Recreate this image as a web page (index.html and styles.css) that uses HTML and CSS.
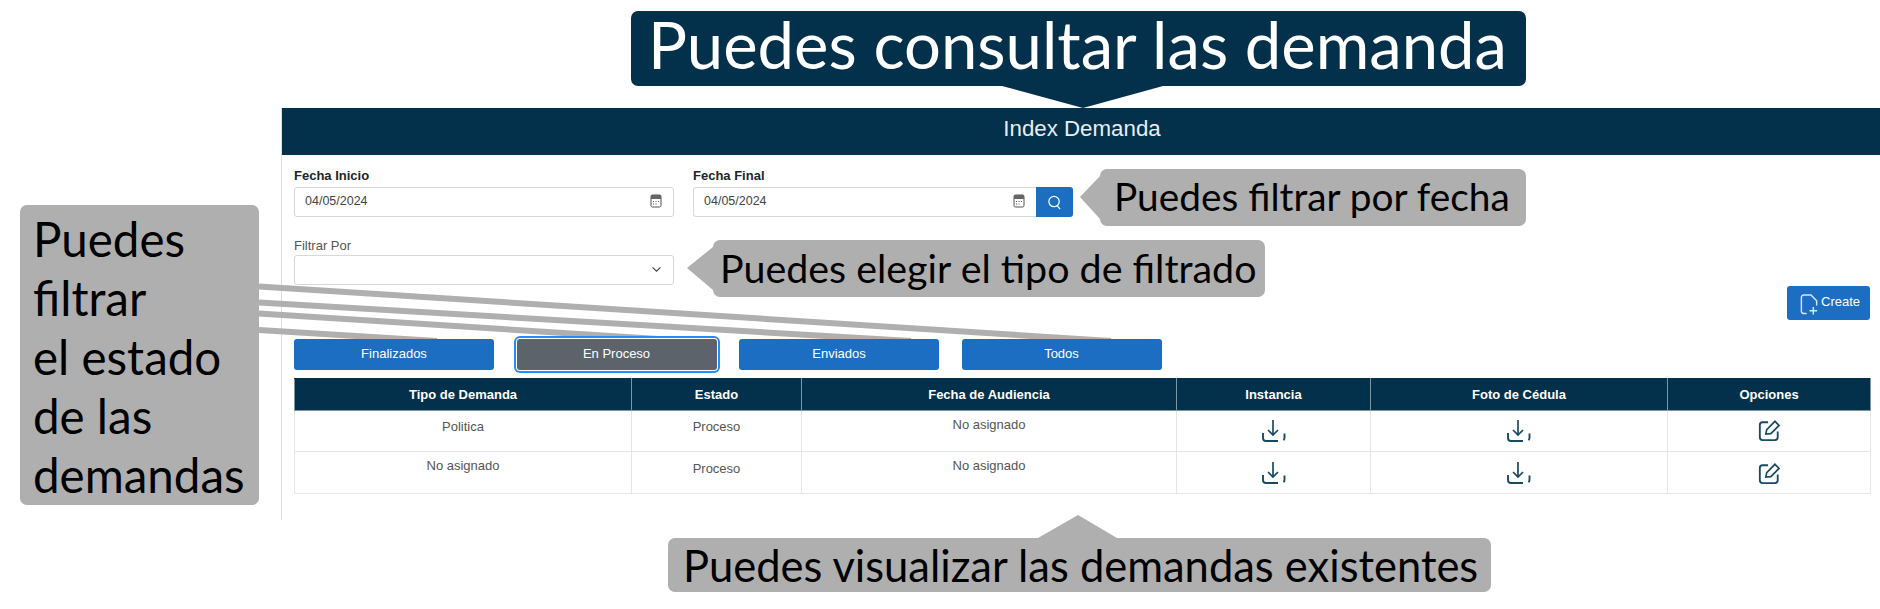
FILE: index.html
```html
<!doctype html>
<html lang="es">
<head>
    <meta charset="UTF-8">
    <title>Index Demanda</title>
    <link rel="stylesheet" href="styles.css">
</head>
<body>
    <div class="stage">
        <section class="panel">
            <header class="panel-title">Index Demanda</header>

            <div class="date-row">
                <div class="field">
                    <label class="label-strong">Fecha Inicio</label>
                    <div class="input">
                        <span>04/05/2024</span>
                        <svg class="cal" viewBox="0 0 12 14"><rect x="1" y="1" width="10" height="12" rx="1.5" fill="none" stroke="#555" stroke-width="1"/><rect x="1" y="1" width="10" height="4" fill="#666"/><path d="M3 7.5h1M5.500 7.500h1M8 7.500h1M3 10h1M5.500 10h1" stroke="#555" stroke-width="1"/></svg>
                    </div>
                </div>
                <div class="field">
                    <label class="label-strong">Fecha Final</label>
                    <div class="input-group">
                        <div class="input input-joined">
                            <span>04/05/2024</span>
                            <svg class="cal" viewBox="0 0 12 14"><rect x="1" y="1" width="10" height="12" rx="1.5" fill="none" stroke="#555" stroke-width="1"/><rect x="1" y="1" width="10" height="4" fill="#666"/><path d="M3 7.5h1M5.500 7.500h1M8 7.500h1M3 10h1M5.500 10h1" stroke="#555" stroke-width="1"/></svg>
                        </div>
                        <button class="search-btn">
                            <svg viewBox="0 0 16 16" width="15" height="15"><circle cx="7.500" cy="7" r="5.500" fill="none" stroke="#fff" stroke-width="1.300"/><path d="M11 11.500L14 15" stroke="#fff" stroke-width="1.300"/></svg>
                        </button>
                    </div>
                </div>
            </div>

            <div class="field filter-field">
                <label class="label-plain">Filtrar Por</label>
                <div class="input select">
                    <svg class="chev" viewBox="0 0 12 8"><path d="M1.500 1.500L6 6l4.500-4.500" fill="none" stroke="#444" stroke-width="1.300"/></svg>
                </div>
            </div>

            <div class="create-row">
                <button class="create-btn">
                    <svg viewBox="0 0 22 24" width="21" height="23"><path d="M8 21.500H5a2.500 2.500 0 0 1-2.500-2.500V4.500A2.500 2.500 0 0 1 5 2h7.500l6 6v5" fill="none" stroke="#dbe6ef" stroke-width="1.500"/><path d="M15 14.500v8M11 18.500h8" stroke="#dbe6ef" stroke-width="1.500"/></svg>
                    <span>Create</span>
                </button>
            </div>

            <div class="status-row">
                <button class="status-btn">Finalizados</button>
                <button class="status-btn is-active">En Proceso</button>
                <button class="status-btn">Enviados</button>
                <button class="status-btn">Todos</button>
            </div>

            <table class="grid">
                <thead>
                    <tr>
                        <th class="c1">Tipo de Demanda</th>
                        <th class="c2">Estado</th>
                        <th class="c3">Fecha de Audiencia</th>
                        <th class="c4">Instancia</th>
                        <th class="c5">Foto de Cédula</th>
                        <th class="c6">Opciones</th>
                    </tr>
                </thead>
                <tbody>
                    <tr>
                        <td>Politica</td>
                        <td>Proceso</td>
                        <td class="tight">No asignado</td>
                        <td class="icon-cell"><svg class="ico" viewBox="0 0 24 24"><use href="#dl"/></svg></td>
                        <td class="icon-cell"><svg class="ico" viewBox="0 0 24 24"><use href="#dl"/></svg></td>
                        <td class="icon-cell edit-cell"><svg class="ico-edit" viewBox="0 0 24 24"><use href="#ed"/></svg></td>
                    </tr>
                    <tr class="row-tall">
                        <td class="tight">No asignado</td>
                        <td class="low">Proceso</td>
                        <td class="tight">No asignado</td>
                        <td class="icon-cell"><svg class="ico" viewBox="0 0 24 24"><use href="#dl"/></svg></td>
                        <td class="icon-cell"><svg class="ico" viewBox="0 0 24 24"><use href="#dl"/></svg></td>
                        <td class="icon-cell edit-cell"><svg class="ico-edit" viewBox="0 0 24 24"><use href="#ed"/></svg></td>
                    </tr>
                </tbody>
            </table>
        </section>

        <!-- annotations over the screenshot -->
        <svg class="leaders" width="1880" height="609">
            <path d="M259 286.500L1111 341M259 302.500L911 341M259 313.500L690 341M259 330L437 341" stroke="#afafaf" stroke-width="6" fill="none"/>
            <path d="M1002 86L1083 108L1163 86Z" fill="#03304a"/>
            <path d="M1100 176L1080 197L1100 219Z" fill="#afafaf"/>
            <path d="M713 247L687 268L713 290Z" fill="#afafaf"/>
            <path d="M1038 538L1078 515L1117 538Z" fill="#afafaf"/>
        </svg>
        <div class="note note-main"><span>Puedes consultar las demanda</span></div>
        <div class="note note-date"><span>Puedes filtrar por fecha</span></div>
        <div class="note note-type"><span>Puedes elegir el tipo de filtrado</span></div>
        <div class="note note-state"><span>Puedes<br>filtrar<br>el estado<br>de las<br>demandas</span></div>
        <div class="note note-list"><span>Puedes visualizar las demandas existentes</span></div>

        <svg width="0" height="0" class="defs">
            <symbol id="dl" viewBox="0 0 24 24">
                <path d="M11 0v15M6 10l5 5 5-5" fill="none" stroke="#1a4a60" stroke-width="1.700"/>
                <path d="M1 13v5a3 3 0 0 0 3 3h12M22.500 13.500v4.500a3 3 0 0 1-1 2.300" fill="none" stroke="#1a4a60" stroke-width="1.900"/>
            </symbol>
            <symbol id="ed" viewBox="0 0 24 24">
                <path d="M11 3.500H5a3 3 0 0 0-3 3V20a3 3 0 0 0 3 3h13.500a3 3 0 0 0 3-3v-6.500" fill="none" stroke="#1a4a60" stroke-width="2"/>
                <path d="M8.500 16.500l1-5L18.500 2.500l4.500 4.500-9 9z" fill="none" stroke="#1a4a60" stroke-width="1.800"/>
            </symbol>
        </svg>
    </div>
</body>
</html>
```

FILE: styles.css
```css
body {
    margin: 0;
    background: #fff;
    font-family: 'Liberation Sans', Arial, sans-serif;
    color: #212529;
}

.stage {
    position: relative;
    width: 1880px;
    height: 609px;
    overflow: hidden;
    padding-top: 108px;
    box-sizing: border-box;
}

.panel {
    margin-left: 281px;
    height: 412px;
    border-left: 1px solid #ddd;
    box-sizing: border-box;
}

.panel-title {
    height: 47px;
    display: flex;
    align-items: center;
    justify-content: center;
    padding: 0 0 6px 2px;
    box-sizing: border-box;
    background: #03304a;
    color: #e8eef2;
    font-size: 22.300px;
}

.date-row {
    display: flex;
    gap: 19px;
    padding: 13px 0 0 12px;
}

.field {
    width: 380px;
}

.label-strong,
.label-plain {
    display: block;
    font-size: 13px;
    line-height: 15px;
    height: 19px;
}

.label-strong {
    font-weight: bold;
}

.label-plain {
    color: #555;
}

.input {
    height: 30px;
    width: 380px;
    box-sizing: border-box;
    border: 1px solid #d5d8dc;
    border-radius: 3px;
    display: flex;
    align-items: center;
    justify-content: space-between;
    padding: 0 10px 2px;
    font-size: 12.500px;
    color: #444;
    background: #fff;
}

.input-group {
    display: flex;
}

.input-joined {
    width: 343px;
    border-radius: 3px 0 0 3px;
    border-right: 0;
}

.cal {
    width: 12px;
    height: 14px;
    margin-right: 1px;
}

.search-btn {
    width: 37px;
    height: 30px;
    padding: 0;
    border: 0;
    border-radius: 0 3px 3px 0;
    background: #1b6ec2;
    display: flex;
    align-items: center;
    justify-content: center;
}

.filter-field {
    margin: 21px 0 0 12px;
}

.select {
    margin-top: -2px;
}

.chev {
    width: 11px;
    height: 7px;
    margin-left: auto;
    margin-right: 1px;
}

.create-row {
    display: flex;
    justify-content: flex-end;
    padding-right: 10px;
    margin-top: 1px;
}

.create-btn {
    width: 83px;
    height: 34px;
    border: 0;
    border-radius: 3px;
    background: #1b6ec2;
    color: #fff;
    font: 13px 'Liberation Sans', Arial, sans-serif;
    display: flex;
    align-items: center;
    padding: 2px 0 0 12px;
    gap: 1px;
}

.create-btn span {
    margin-bottom: 5px;
}

.status-row {
    display: flex;
    gap: 22.500px;
    padding-left: 12px;
    margin-top: 19px;
    position: relative;
    z-index: 2;
}

.status-btn {
    width: 200px;
    height: 31px;
    border: 0;
    border-radius: 3px;
    background: #1b6ec2;
    color: #fff;
    font: 13px 'Liberation Sans', Arial, sans-serif;
    padding: 0 0 2px;
}

.status-btn.is-active {
    background: #5c636a;
    box-shadow: 0 0 0 1px #fff, 0 0 0 3px #258cfb;
}

.grid {
    margin: 8px 0 0 12px;
    width: 1576px;
    table-layout: fixed;
    border-collapse: collapse;
    font-size: 13px;
    line-height: 15px;
    color: #555;
    text-align: center;
}

.c1 { width: 337px; }
.c2 { width: 170px; }
.c3 { width: 375px; }
.c4 { width: 194px; }
.c5 { width: 297px; }
.c6 { width: 203px; }

.grid th {
    box-sizing: border-box;
    height: 32px;
    padding: 0;
    background: #03304a;
    color: #fff;
    font-weight: bold;
    border: 1px solid #7f97a5;
    border-top-color: #03304a;
}

.grid td {
    box-sizing: border-box;
    height: 41px;
    padding: 8px 0 0;
    vertical-align: top;
    border: 1px solid #e3e5e7;
}

.grid .row-tall td {
    height: 42px;
}

.grid td.tight {
    padding-top: 6px;
}

.grid td.low {
    padding-top: 9px;
}

.grid td.icon-cell {
    padding-top: 9px;
}

.grid td.edit-cell {
    padding-top: 8px;
}

.grid .row-tall td.icon-cell {
    padding-top: 10px;
}

.ico {
    width: 24px;
    height: 24px;
    display: block;
    margin: 0 auto;
}

.ico-edit {
    width: 22px;
    height: 22px;
    display: block;
    margin: 0 auto;
}

.leaders {
    position: absolute;
    left: 0;
    top: 0;
    z-index: 1;
}

.defs {
    position: absolute;
}

.note {
    position: absolute;
    z-index: 3;
    box-sizing: border-box;
    border-radius: 7px;
    background: #afafaf;
    color: #000;
    font-family: Lato, 'Open Sans', sans-serif;
    white-space: nowrap;
    display: flex;
    align-items: center;
}

.note-main {
    left: 631px;
    top: 11px;
    width: 895px;
    height: 75px;
    padding: 0 0 9px 17px;
    background: #03304a;
    color: #fff;
    font-size: 65.200px;
}

.note-date {
    left: 1100px;
    top: 169px;
    width: 426px;
    height: 57px;
    padding: 0 0 4px 14px;
    font-size: 38.800px;
}

.note-type {
    left: 713px;
    top: 240px;
    width: 552px;
    height: 57px;
    padding: 0 0 2px 7px;
    font-size: 39.400px;
}

.note-state {
    left: 20px;
    top: 205px;
    width: 239px;
    height: 300px;
    padding: 2px 0 0 13px;
    font-size: 47.500px;
    line-height: 59px;
}

.note-list {
    left: 668px;
    top: 538px;
    width: 823px;
    height: 54px;
    padding-left: 15px;
    font-size: 43.500px;
}
```
